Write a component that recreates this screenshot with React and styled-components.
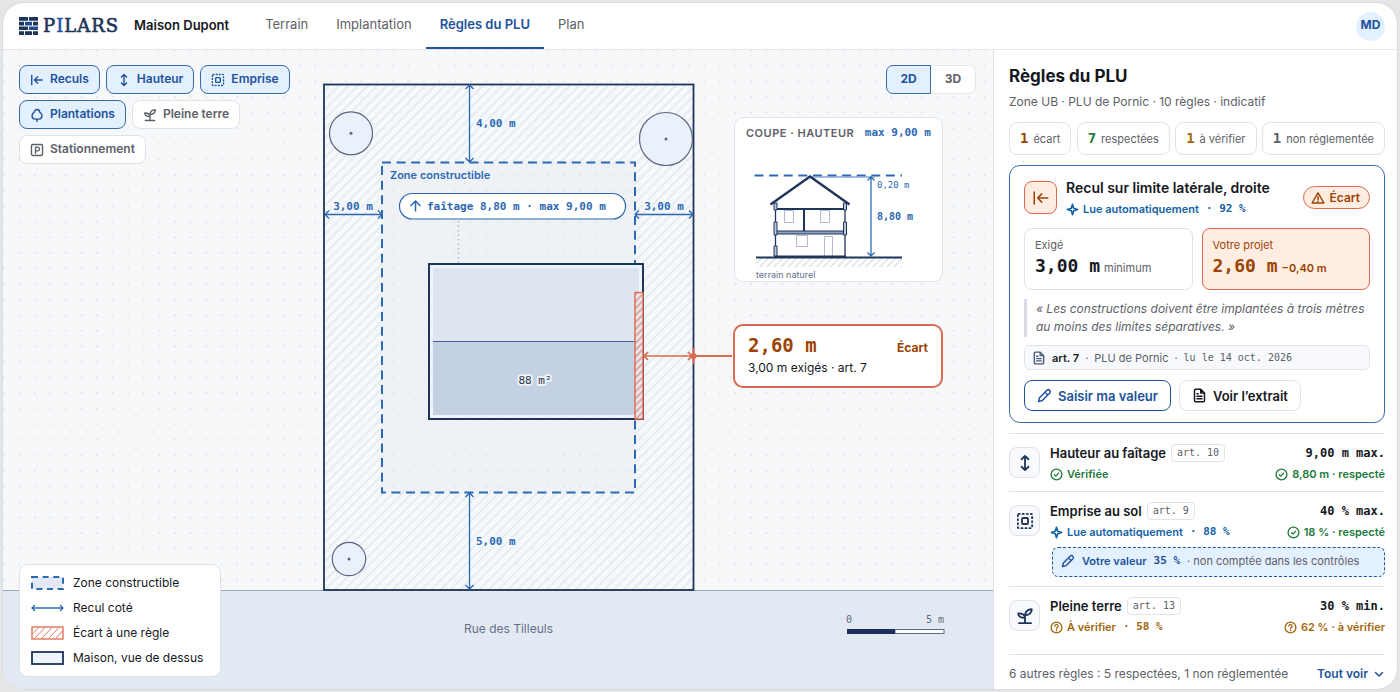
import React from "react";
import styled, { createGlobalStyle, css } from "styled-components";

const sans = `Inter, "Liberation Sans", sans-serif`;
const mono = `"DejaVu Sans Mono", "Liberation Mono", monospace`;

const c = {
  navy: "#1e3458",
  ink: "#15181d",
  text: "#5d6168",
  blue: "#21529c",
  dim: "#2d69b3",
  link: "#1361a5",
  tint: "#e3f0ff",
  line: "#dfe3e8",
  red: "#dc6a4f",
  rust: "#9c4304",
  peach: "#ffede2",
  green: "#217a3c",
  amber: "#a3650b",
};

const GlobalStyle = createGlobalStyle`
  * { box-sizing: border-box; }
  html, body { margin: 0; background: #e4e6e8; }
  body { font-family: ${sans}; color: ${c.ink}; font-size: 12px; line-height: 16px; }
  button { font: inherit; color: inherit; cursor: pointer; margin: 0; }
  h1, h2, h3, p, ul, dl, dd, blockquote { margin: 0; padding: 0; font-size: inherit; font-weight: inherit; }
  ul { list-style: none; }
  svg { display: block; flex: none; }
`;

const Page = styled.div`
  min-height: 100vh;
  padding: 2px;
  display: flex;
`;

const Frame = styled.div`
  flex: 1;
  min-width: 0;
  display: flex;
  flex-direction: column;
  background: #fff;
  border: 1px solid #d9dcdf;
  border-radius: 22px;
  overflow: hidden;
`;

const Header = styled.header`
  display: flex;
  align-items: center;
  height: 47px;
  padding: 0 12px 0 16px;
  border-bottom: 1px solid #e3e5e8;
`;

const Brand = styled.a`
  display: flex;
  align-items: center;
  gap: 5px;
  color: ${c.navy};
  text-decoration: none;
  font-family: "DejaVu Serif", serif;
  font-size: 18px;
  line-height: 24px;
  letter-spacing: 1px;
  -webkit-text-stroke: 0.6px;
  em { font-style: normal; color: #1f55a5; }
`;

const Project = styled.strong`
  margin-left: 15px;
  padding-bottom: 3px;
  font-size: 13px;
  font-weight: 600;
`;

const Nav = styled.nav`
  display: flex;
  align-self: stretch;
  margin-left: 22px;
  flex: 1;
`;

const NavLink = styled.a`
  display: flex;
  align-items: center;
  padding: 0 14px 4px;
  font-size: 13px;
  text-decoration: none;
  color: ${(p) => (p.$active ? c.blue : c.text)};
  font-weight: ${(p) => (p.$active ? 600 : 400)};
  box-shadow: ${(p) => (p.$active ? `inset 0 -2px ${c.blue}` : "none")};
`;

const Avatar = styled.button`
  width: 29px;
  height: 29px;
  border: 0;
  border-radius: 50%;
  padding: 0 0 2px;
  background: ${c.tint};
  color: ${c.blue};
  font-size: 12px;
  font-weight: 700;
`;

const Main = styled.main`
  flex: 1;
  display: grid;
  grid-template-columns: minmax(0, 1fr) 404px;
`;

const Canvas = styled.section`
  position: relative;
  min-height: 600px;
  background: #f6f8fa;
`;

const Drawing = styled.svg`
  position: absolute;
  inset: 0;
  width: 100%;
  height: 100%;
`;

const Layers = styled.div`
  position: absolute;
  top: 15px;
  left: 16px;
  width: 280px;
  display: flex;
  flex-wrap: wrap;
  gap: 6px;
`;

const LayerButton = styled.button`
  display: flex;
  align-items: center;
  gap: 6px;
  height: 29px;
  padding: 0 10px 2px;
  border-radius: 8px;
  border: 1px solid ${(p) => (p.$on ? "#3a68af" : c.line)};
  background: ${(p) => (p.$on ? c.tint : "#fff")};
  color: ${(p) => (p.$on ? c.blue : c.text)};
  font-size: 12px;
  font-weight: 600;
  svg { position: relative; top: 1px; }
`;

const ViewSwitch = styled.div`
  position: absolute;
  top: 15px;
  right: 17px;
  display: flex;
`;

const ViewButton = styled.button`
  width: 45px;
  height: 29px;
  padding: 0 0 2px;
  border: 1px solid ${(p) => (p.$on ? "#3a6cb4" : "#e6e9ec")};
  border-left-width: ${(p) => (p.$on ? 1 : 0)}px;
  border-radius: ${(p) => (p.$on ? "7px 0 0 7px" : "0 7px 7px 0")};
  background: ${(p) => (p.$on ? c.tint : "#fff")};
  color: ${(p) => (p.$on ? c.blue : c.text)};
  font-weight: 700;
`;

const SectionCard = styled.article`
  position: absolute;
  top: 67px;
  left: 731px;
  width: 209px;
  border: 1px solid ${c.line};
  border-radius: 9px;
  background: #fff;
`;

const SectionHead = styled.header`
  display: flex;
  justify-content: space-between;
  padding: 7px 11px 0;
  height: 42px;
  font-size: 11px;
  h2 { font-weight: 600; color: ${c.text}; letter-spacing: 0.5px; }
  span { font-family: ${mono}; font-weight: 700; color: ${c.dim}; }
`;

const Callout = styled.article`
  position: absolute;
  top: 274px;
  left: 730px;
  width: 210px;
  height: 64px;
  padding: 7px 13px 0;
  border: 2px solid ${c.red};
  border-radius: 10px;
  background: #fff;
`;

const CalloutHead = styled.div`
  display: flex;
  justify-content: space-between;
  align-items: baseline;
  color: ${c.rust};
  font-weight: 700;
  line-height: 24px;
  strong { font-family: ${mono}; font-size: 19px; }
`;

const Legend = styled.ul`
  position: absolute;
  left: 16px;
  bottom: 12px;
  width: 202px;
  padding: 10px 11px;
  display: grid;
  gap: 9px;
  border: 1px solid ${c.line};
  border-radius: 9px;
  background: #fff;
  li { display: flex; align-items: center; gap: 9px; }
`;

const Panel = styled.aside`
  border-left: 1px solid #dfe3e8;
  padding: 15px 12px 0 15px;
  display: flex;
  flex-direction: column;
`;

const PanelTitle = styled.h1`
  font-size: 17px;
  line-height: 22px;
  font-weight: 700;
`;

const Zone = styled.p`
  margin-top: 7px;
  color: ${c.text};
`;

const Stats = styled.dl`
  display: flex;
  justify-content: space-between;
  margin-top: 12px;
`;

const Stat = styled.div`
  display: flex;
  flex-direction: row-reverse;
  align-items: baseline;
  gap: 5px;
  height: 33px;
  padding: 7px 10px 0;
  border: 1px solid ${c.line};
  border-radius: 8px;
  dt { font-size: 11px; color: ${c.text}; }
  dd { font-family: ${mono}; font-size: 14px; font-weight: 700; color: ${(p) => p.$color}; }
`;

const RuleCard = styled.article`
  margin-top: 10px;
  padding: 12px 14px 11px;
  border: 1px solid #3d6bb0;
  border-radius: 11px;
  display: flex;
  flex-direction: column;
`;

const CardHead = styled.div`
  display: flex;
  align-items: center;
  gap: 9px;
  > div { flex: 1; }
  h2 { font-size: 14px; line-height: 20px; font-weight: 600; margin-bottom: 3px; white-space: nowrap; }
`;

const IconTile = styled.span`
  display: grid;
  place-items: center;
  width: ${(p) => (p.$alert ? 33 : 31)}px;
  height: ${(p) => (p.$alert ? 33 : 31)}px;
  border-radius: 8px;
  border: 1px solid ${(p) => (p.$alert ? c.red : c.line)};
  background: ${(p) => (p.$alert ? c.peach : "#f7f9fc")};
  color: ${(p) => (p.$alert ? c.rust : c.navy)};
`;

const Status = styled.span`
  display: flex;
  align-items: center;
  gap: 4px;
  font-size: 11px;
  line-height: 16px;
  font-weight: 600;
  white-space: pre;
  color: ${(p) => p.$color};
  b { font-family: ${mono}; font-weight: 700; margin-left: 3px; }
`;

const Badge = styled.span`
  display: flex;
  align-items: center;
  gap: 5px;
  height: 23px;
  padding: 0 9px 0 7px;
  border: 1px solid ${c.red};
  border-radius: 12px;
  background: ${c.peach};
  color: ${c.rust};
  font-weight: 600;
`;

const Values = styled.div`
  display: grid;
  grid-template-columns: 1fr 1fr;
  gap: 9px;
  margin-top: 11px;
`;

const ValueBox = styled.div`
  height: 62px;
  padding: 8px 10px;
  border-radius: 8px;
  border: 1px solid ${(p) => (p.$alert ? c.red : c.line)};
  background: ${(p) => (p.$alert ? c.peach : "#fff")};
  color: ${(p) => (p.$alert ? c.rust : c.text)};
  font-size: 11px;
  p { white-space: nowrap; line-height: 26px; font-weight: ${(p) => (p.$alert ? 600 : 400)}; }
  strong {
    font-family: ${mono};
    font-size: 18px;
    margin-right: 4px;
    color: ${(p) => (p.$alert ? c.rust : c.ink)};
  }
`;

const Quote = styled.blockquote`
  margin-top: 9px;
  padding: 1px 0 1px 9px;
  border-left: 3px solid #d9dbe4;
  font-style: italic;
  line-height: 18px;
  color: ${c.text};
`;

const Source = styled.p`
  display: flex;
  align-items: center;
  gap: 6px;
  height: 25px;
  margin-top: 8px;
  padding: 0 7px;
  border: 1px solid ${c.line};
  border-radius: 6px;
  background: #f7f9fc;
  font-size: 11px;
  color: ${c.text};
  svg { color: #4a5878; }
  strong { font-weight: 600; color: ${c.ink}; }
  time { font-family: ${mono}; font-size: 10px; }
`;

const Actions = styled.div`
  display: flex;
  gap: 8px;
  margin-top: 10px;
`;

const ActionButton = styled.button`
  display: flex;
  align-items: center;
  gap: 6px;
  height: 31px;
  padding: 0 12px;
  border-radius: 8px;
  border: 1px solid ${(p) => (p.$primary ? c.blue : c.line)};
  background: #fff;
  color: ${(p) => (p.$primary ? c.blue : c.ink)};
  font-size: 13px;
  font-weight: 600;
`;

const Rules = styled.ul`
  margin-top: 10px;
`;

const Rule = styled.li`
  display: grid;
  grid-template-columns: 31px 1fr auto;
  column-gap: 10px;
  align-items: start;
  border-top: 1px solid ${c.line};
  padding: 9px 0;
  > span { margin-top: 4px; }
`;

const RuleName = styled.div`
  display: flex;
  align-items: center;
  gap: 5px;
  height: 20px;
  margin-bottom: 3px;
  h3 { font-size: 13px; font-weight: 600; }
  span {
    height: 18px;
    padding: 0 5px;
    border: 1px solid ${c.line};
    border-radius: 4px;
    font-family: ${mono};
    font-size: 10px;
    line-height: 15px;
    color: ${c.text};
  }
`;

const RuleLimit = styled.div`
  display: flex;
  flex-direction: column;
  align-items: flex-end;
  > b { font-family: ${mono}; line-height: 20px; margin-bottom: 3px; }
`;

const OwnValue = styled.p`
  grid-column: 2 / -1;
  display: flex;
  align-items: center;
  gap: 7px;
  height: 30px;
  margin: 7px 0 0 2px;
  padding: 0 8px 2px;
  border: 1px dashed ${c.blue};
  border-radius: 6px;
  background: ${c.tint};
  color: ${c.text};
  font-size: 11px;
  white-space: pre;
  svg { color: ${c.blue}; }
  strong { font-weight: 600; color: ${c.blue}; }
  b { font-family: ${mono}; color: ${c.blue}; }
`;

const Footer = styled.footer`
  display: flex;
  justify-content: space-between;
  align-items: center;
  height: 35px;
  margin-top: auto;
  padding-top: 3px;
  border-top: 1px solid ${c.line};
  color: ${c.text};
`;

const MoreButton = styled.button`
  display: flex;
  align-items: center;
  gap: 5px;
  padding: 0;
  border: 0;
  background: none;
  color: ${c.blue};
  font-weight: 600;
`;

const glyphs = {
  setback: <path d="M3 4v16M21 12H8M13 6.500l-5.500 5.500 5.500 5.500" />,
  height: <path d="M12 3v18M7.500 7 12 2.500 16.500 7M7.500 17l4.500 4.500 4.500-4.500" />,
  footprint: (
    <>
      <rect x="2.500" y="2.500" width="19" height="19" rx="1" strokeDasharray="1.500 3.900" />
      <rect x="8" y="8" width="8" height="8" rx="1.500" />
    </>
  ),
  tree: <path d="M12 19v4M12 2.500c3 0 4.500 2.500 4.500 4.500 2.500 1.200 4 3.200 4 6 0 3.500-2.500 6-5.500 6H9c-3 0-5.500-2.500-5.500-6 0-2.800 1.500-4.800 4-6 0-2 1.500-4.500 4.500-4.500z" />,
  sprout: (
    <path d="M4 21.500h16M12 21.500V13M12 14.500c0-4-3-6-9-6 0 4 3 6 9 6zM12.500 11c-.5-4.500 3-8 8.500-8 0 5-3.500 8-8.500 8z" />
  ),
  parking: (
    <>
      <rect x="2.500" y="2.500" width="19" height="19" rx="2.500" />
      <path d="M9.500 18V7h3.500a3 3 0 0 1 0 6.500H9.500" />
    </>
  ),
  spark: <path d="M12 2.500l2.200 7.300 7.300 2.200-7.300 2.200L12 21.500l-2.200-7.300L2.500 12l7.300-2.200z" strokeWidth="3" />,
  warn: <path d="M12 3 22 20.500H2zM12 9.500v5M12 17v1" />,
  doc: <path d="M14 2H6a2 2 0 0 0-2 2v16a2 2 0 0 0 2 2h12a2 2 0 0 0 2-2V8zM14 2v6h6M8 9h2M8 13h8M8 17h8" />,
  pencil: <path d="M8.500 20 2.500 21.500 4 15.500 16 3.500a3.200 3.200 0 0 1 4.500 4.500zM14.500 8.500l1.500 1.500" />,
  check: (
    <>
      <circle cx="12" cy="12" r="10" />
      <path d="M8 12.500l3 2.500 5-5.500" />
    </>
  ),
  question: (
    <>
      <circle cx="12" cy="12" r="10" />
      <path d="M9 9.500a3 3 0 1 1 4.500 2.600c-1 .6-1.500 1-1.500 2M12 17v.8" />
    </>
  ),
  down: <path d="M5 9l7 7 7-7" />,
};

const Icon = ({ name, size = 14, weight = 2.4 }) => (
  <svg width={size} height={size} viewBox="0 0 24 24" fill="none" stroke="currentColor"
    strokeWidth={weight} strokeLinecap="round" strokeLinejoin="round" aria-hidden="true">
    {glyphs[name]}
  </svg>
);

const Logo = () => (
  <svg width="19" height="18" viewBox="0 0 19 18" fill={c.navy} aria-hidden="true">
    <path d="M0 0h9v3.800H0zM10 0h9v3.800h-9zM0 4.800h5v3.600H0zM14 4.800h5v3.600h-5zM0 9.500h9v3.600H0zM0 14.200h5V18H0zM6 14.200h7V18H6zM14 14.200h5V18h-5z" />
    <path fill="#1f4b8c" d="M6 4.800h7v3.600H6zM10 9.500h9v3.600h-9z" />
  </svg>
);

const Label = styled.text`
  font-family: ${(p) => (p.$mono ? mono : sans)};
  font-size: ${(p) => p.$size || 11}px;
  font-weight: ${(p) => p.$weight || 700};
  fill: ${(p) => p.$color || c.dim};
  ${(p) => p.$halo && css`
    paint-order: stroke;
    stroke: ${p.$halo};
    stroke-width: 4px;
    stroke-linejoin: round;
  `}
`;

const Arrow = ({ x1, y1, x2, y2, color = c.dim, width = 1.3, head = 4 }) => {
  const vertical = x1 === x2;
  const d = vertical
    ? `M${x1} ${y1}V${y2}M${x1 - head} ${y1 + head}L${x1} ${y1}l${head} ${head}M${x2 - head} ${y2 - head}L${x2} ${y2}l${head} ${-head}`
    : `M${x1} ${y1}H${x2}M${x1 + head} ${y1 - head}L${x1} ${y1}l${head} ${head}M${x2 - head} ${y2 - head}L${x2} ${y2}l${-head} ${head}`;
  return <path d={d} fill="none" stroke={color} strokeWidth={width} />;
};

const Tree = ({ x, y, r }) => (
  <>
    <circle cx={x} cy={y} r={r} fill="#ebf1fa" stroke="#5c6582" strokeWidth="1.200" />
    <circle cx={x} cy={y} r="1.500" fill="#5c6582" />
  </>
);

const SitePlan = () => (
  <Drawing viewBox="3 50 990 639" preserveAspectRatio="xMidYMid slice" role="img" aria-label="Plan de masse">
    <defs>
      <pattern id="dots" x="3.600" y="50.500" width="15.570" height="15.570" patternUnits="userSpaceOnUse" patternTransform="translate(-7.800 -7.800)">
        <circle cx="7.800" cy="7.800" r="0.900" fill="#dde1e6" />
      </pattern>
      <pattern id="hatch" width="6.800" height="6.800" patternUnits="userSpaceOnUse" patternTransform="rotate(45)">
        <path d="M1 0V7" stroke="#d5dbe2" strokeWidth="0.900" />
      </pattern>
      <pattern id="gapHatch" width="4.900" height="4.900" patternUnits="userSpaceOnUse" patternTransform="rotate(45)">
        <path d="M1 0V5" stroke={c.red} strokeWidth="1" />
      </pattern>
    </defs>
    <rect x="-1000" y="-1000" width="3000" height="3000" fill="url(#dots)" />
    <rect x="-1000" y="590" width="3000" height="600" fill="#e3e9f2" />
    <path d="M-1000 590.500H2000" stroke="#9aa6bb" />
    <rect x="324" y="84.500" width="369.500" height="505.500" fill="#f5fafd" fillOpacity=".6" />
    <rect x="324" y="84.500" width="369.500" height="505.500" fill="url(#hatch)" stroke={c.navy} strokeWidth="1.800" />
    <rect x="382" y="162.500" width="253" height="330" fill="#eef2f7" />
    <rect x="382" y="162.500" width="253" height="330" fill="url(#dots)" stroke={c.dim} strokeWidth="2" strokeDasharray="9 5.600" />
    <Tree x={351} y={133.300} r={21.500} />
    <Tree x={666} y={139} r={26.500} />
    <Tree x={349} y={559} r={16.700} />
    <Arrow x1={469.500} y1={85} x2={469.500} y2={162} />
    <Arrow x1={469.500} y1={493} x2={469.500} y2={589} />
    <Arrow x1={325} y1={214.500} x2={382} y2={214.500} />
    <Arrow x1={635} y1={214.500} x2={693} y2={214.500} />
    <Label $mono $halo="#f5f8fb" x="476" y="127">4,00 m</Label>
    <Label $mono $halo="#f5f8fb" x="476" y="545">5,00 m</Label>
    <Label $mono $halo="#f5f8fb" x="353" y="210" textAnchor="middle">3,00 m</Label>
    <Label $mono $halo="#f5f8fb" x="664" y="210" textAnchor="middle">3,00 m</Label>
    <Label $weight={600} x="390" y="179">Zone constructible</Label>
    <path d="M458.500 221V263" stroke="#b3bac6" strokeWidth="1.500" strokeDasharray="1.500 3" />
    <rect x="399.500" y="193.500" width="226" height="25.500" rx="12.700" fill="#fff" stroke={c.dim} strokeWidth="1.200" />
    <path d="M415.500 211.500V201M410.500 206l5-5 5 5" fill="none" stroke={c.dim} strokeWidth="1.500" />
    <Label $mono x="427" y="210">faîtage 8,80 m · max 9,00 m</Label>
    <rect x="429" y="264" width="214" height="155" fill="#edf3fb" stroke={c.navy} strokeWidth="2" />
    <rect x="433" y="268" width="206" height="73" fill="#dde5f0" />
    <rect x="433" y="341" width="206" height="74" fill="#c4d1e3" />
    <path d="M433 341.500H639" stroke="#43659a" />
    <Label $mono $weight={400} $halo="#edf2f9" $color="#2a3344" x="535" y="384" textAnchor="middle">88 m²</Label>
    <rect x="635" y="292.500" width="8" height="126.500" fill="#e6e6ee" />
    <rect x="635" y="292.500" width="8" height="126.500" fill="url(#gapHatch)" stroke={c.red} strokeWidth="1.400" />
    <Arrow x1={644} y1={356} x2={692} y2={356} color={c.red} width={1.700} />
    <path d="M693.500 348V364M693 356H732" stroke={c.red} strokeWidth="1.800" />
    <circle cx="693.500" cy="356" r="3" fill={c.red} />
    <Label $size={12} $weight={400} $color="#66708a" x="508.500" y="633" textAnchor="middle">Rue des Tilleuls</Label>
    <Label $mono $size={10} $weight={400} $color="#5d6a84" x="846" y="623">0</Label>
    <Label $mono $size={10} $weight={400} $color="#5d6a84" x="944" y="623" textAnchor="end">5 m</Label>
    <rect x="895" y="629.500" width="49" height="4" fill="#fff" stroke="#5d6a84" />
    <rect x="847" y="629" width="48" height="5" fill="#1c2f5c" />
  </Drawing>
);

const SectionDrawing = () => (
  <svg width="100%" viewBox="735 160 207 121" role="img" aria-label="Coupe de la maison">
    <defs>
      <pattern id="soil" width="5" height="5" patternUnits="userSpaceOnUse" patternTransform="rotate(45)">
        <path d="M1 0V5" stroke="#cdd2da" />
      </pattern>
    </defs>
    <rect x="756" y="258" width="146" height="9" fill="url(#soil)" />
    <path d="M754.500 175.500H902" stroke={c.dim} strokeWidth="2" strokeDasharray="9 5.600" />
    <path d="M810 177H875" stroke="#7fa3d3" strokeWidth="1.400" />
    <g fill="none" stroke="#b5b9d0">
      <path d="M784.500 210.500h9v12h-9zM820.500 210.500h9v12h-9zM796.500 235.500h11v11h-11zM824.500 257v-20.500h8V257" />
    </g>
    <path d="M770.500 204.500 810 176.500 849.500 204.500" fill="none" stroke={c.navy} strokeWidth="2.400" />
    <path d="M776 209H845M804 209V232M756 257.500H902M774 256.500H846" stroke={c.navy} strokeWidth="2" />
    <path d="M775.500 203V257M845 203V257" stroke={c.navy} strokeWidth="1.300" />
    <path d="M775 231H845v3H775z" fill="#8ca0bc" stroke={c.navy} strokeWidth="1" />
    <path d="M774 203h3v7h-3zM774 222h3v13h-3zM774 246h3v10h-3zM843.500 203h3v7h-3zM843.500 222h3v13h-3z" fill="#b9c6da" stroke={c.navy} />
    <Arrow x1={871} y1={177} x2={871} y2={256} head={3.500} />
    <Label $mono $size={9} $weight={400} x="877" y="188">0,20 m</Label>
    <Label $mono $size={10} x="877" y="220">8,80 m</Label>
    <Label $size={9} $weight={400} $color="#66708a" x="756" y="278">terrain naturel</Label>
  </svg>
);

const swatches = {
  zone: <rect x="1" y="4" width="31" height="12" fill="#e3e9f4" stroke={c.dim} strokeWidth="2" strokeDasharray="6 4.600" />,
  dim: <Arrow x1={1} y1={10} x2={32} y2={10} head={3} />,
  gap: (
    <g stroke={c.red}>
      <rect x="1" y="4" width="31" height="12" fill="#fff" strokeWidth="1.300" />
      <path d="M1.500 11l6-6.500M3.500 15.500L14 4.500M10.500 15.500L21 4.500M17.500 15.500L28 4.500M24.500 15.500L31.500 8" strokeWidth=".9" />
    </g>
  ),
  house: <rect x="1" y="4" width="31" height="12" fill="#eef4fb" stroke={c.navy} strokeWidth="1.800" />,
};

const LegendItem = ({ kind, children }) => (
  <li>
    <svg width="33" height="16" viewBox="0 2 33 16" aria-hidden="true">{swatches[kind]}</svg>
    {children}
  </li>
);

const layers = [
  ["setback", "Reculs", true],
  ["height", "Hauteur", true],
  ["footprint", "Emprise", true],
  ["tree", "Plantations", true],
  ["sprout", "Pleine terre", false],
  ["parking", "Stationnement", false],
];

const stats = [
  ["1", "écart", c.rust],
  ["7", "respectées", c.green],
  ["1", "à vérifier", c.amber],
  ["1", "non réglementée", c.text],
];

const rules = [
  {
    icon: "height", name: "Hauteur au faîtage", article: "art. 10", limit: "9,00 m max.",
    read: ["check", c.green, "Vérifiée"], result: ["check", c.green, "8,80 m · respecté"],
  },
  {
    icon: "footprint", name: "Emprise au sol", article: "art. 9", limit: "40 % max.",
    read: ["spark", c.link, "Lue automatiquement", "88 %"], result: ["check", c.green, "18 % · respecté"],
    own: "35 %",
  },
  {
    icon: "sprout", name: "Pleine terre", article: "art. 13", limit: "30 % min.",
    read: ["question", c.amber, "À vérifier", "58 %"], result: ["question", c.amber, "62 % · à vérifier"],
  },
];

const StatusLine = ({ data: [icon, color, label, score] }) => (
  <Status $color={color}>
    <Icon name={icon} size={13} />
    {label}
    {score && <b>· {score}</b>}
  </Status>
);

export default function App() {
  return (
    <Page>
      <GlobalStyle />
      <Frame>
        <Header>
          <Brand href="#"><Logo /><span>P<em>I</em>LARS</span></Brand>
          <Project>Maison Dupont</Project>
          <Nav>
            <NavLink href="#terrain">Terrain</NavLink>
            <NavLink href="#implantation">Implantation</NavLink>
            <NavLink href="#regles" $active aria-current="page">Règles du PLU</NavLink>
            <NavLink href="#plan">Plan</NavLink>
          </Nav>
          <Avatar>MD</Avatar>
        </Header>
        <Main>
          <Canvas>
            <SitePlan />
            <Layers>
              {layers.map(([icon, label, on]) => (
                <LayerButton key={label} $on={on} aria-pressed={on}>
                  <Icon name={icon} />
                  {label}
                </LayerButton>
              ))}
            </Layers>
            <ViewSwitch>
              <ViewButton $on aria-pressed="true">2D</ViewButton>
              <ViewButton aria-pressed="false">3D</ViewButton>
            </ViewSwitch>
            <SectionCard>
              <SectionHead><h2>COUPE · HAUTEUR</h2><span>max 9,00 m</span></SectionHead>
              <SectionDrawing />
            </SectionCard>
            <Callout>
              <CalloutHead><strong>2,60 m</strong><span>Écart</span></CalloutHead>
              <p>3,00 m exigés · art. 7</p>
            </Callout>
            <Legend>
              <LegendItem kind="zone">Zone constructible</LegendItem>
              <LegendItem kind="dim">Recul coté</LegendItem>
              <LegendItem kind="gap">Écart à une règle</LegendItem>
              <LegendItem kind="house">Maison, vue de dessus</LegendItem>
            </Legend>
          </Canvas>
          <Panel>
            <PanelTitle>Règles du PLU</PanelTitle>
            <Zone>Zone UB · PLU de Pornic · 10 règles · indicatif</Zone>
            <Stats>
              {stats.map(([value, label, color]) => (
                <Stat key={label} $color={color}><dt>{label}</dt><dd>{value}</dd></Stat>
              ))}
            </Stats>
            <RuleCard>
              <CardHead>
                <IconTile $alert><Icon name="setback" size={18} weight={2} /></IconTile>
                <div>
                  <h2>Recul sur limite latérale, droite</h2>
                  <StatusLine data={["spark", c.link, "Lue automatiquement", "92 %"]} />
                </div>
                <Badge><Icon name="warn" />Écart</Badge>
              </CardHead>
              <Values>
                <ValueBox>Exigé<p><strong>3,00 m</strong>minimum</p></ValueBox>
                <ValueBox $alert>Votre projet<p><strong>2,60 m</strong>−0,40 m</p></ValueBox>
              </Values>
              <Quote>« Les constructions doivent être implantées à trois mètres au moins des limites séparatives. »</Quote>
              <Source>
                <Icon name="doc" weight={2.4} />
                <strong>art. 7</strong><span>·</span><span>PLU de Pornic</span><span>·</span><time>lu le 14 oct. 2026</time>
              </Source>
              <Actions>
                <ActionButton $primary><Icon name="pencil" size={15} />Saisir ma valeur</ActionButton>
                <ActionButton><Icon name="doc" size={15} />Voir l’extrait</ActionButton>
              </Actions>
            </RuleCard>
            <Rules>
              {rules.map((r) => (
                <Rule key={r.name}>
                  <IconTile><Icon name={r.icon} size={18} weight={2.4} /></IconTile>
                  <div>
                    <RuleName><h3>{r.name}</h3><span>{r.article}</span></RuleName>
                    <StatusLine data={r.read} />
                  </div>
                  <RuleLimit>
                    <b>{r.limit}</b>
                    <StatusLine data={r.result} />
                  </RuleLimit>
                  {r.own && (
                    <OwnValue>
                      <Icon name="pencil" />
                      <strong>Votre valeur</strong>
                      <b>{r.own}</b>
                      <span>· non comptée dans les contrôles</span>
                    </OwnValue>
                  )}
                </Rule>
              ))}
            </Rules>
            <Footer>
              <span>6 autres règles : 5 respectées, 1 non réglementée</span>
              <MoreButton>Tout voir<Icon name="down" size={12} weight={3} /></MoreButton>
            </Footer>
          </Panel>
        </Main>
      </Frame>
    </Page>
  );
}
